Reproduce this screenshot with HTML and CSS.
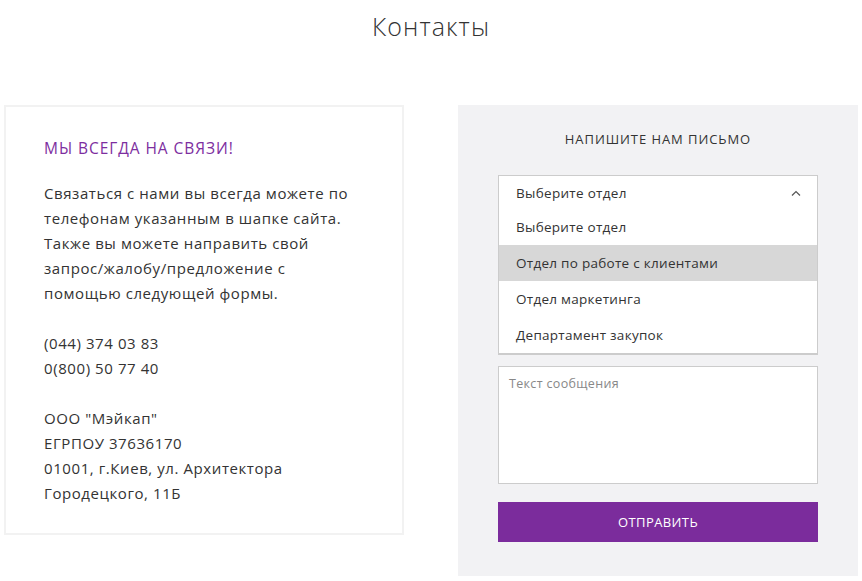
FILE: index.html
```html
<!DOCTYPE html>
<html lang="ru">
<head>
<meta charset="utf-8">
<title>Контакты</title>
<link rel="stylesheet" href="styles.css">
</head>
<body>
<h1 class="page-title">Контакты</h1>
<div class="contacts">
  <div class="card">
    <h2 class="card-title">МЫ ВСЕГДА НА СВЯЗИ!</h2>
    <p class="card-text">Связаться с нами вы всегда можете по<br>телефонам указанным в шапке сайта.<br>Также вы можете направить свой<br>запрос/жалобу/предложение с<br>помощью следующей формы.<br><br>(044) 374 03 83<br>0(800) 50 77 40<br><br>ООО "Мэйкап"<br>ЕГРПОУ 37636170<br>01001, г.Киев, ул. Архитектора<br>Городецкого, 11Б</p>
  </div>
  <div class="panel">
    <h2 class="panel-title">НАПИШИТЕ НАМ ПИСЬМО</h2>
    <div class="form">
      <div class="select">
        <div class="select-head">
          <span>Выберите отдел</span>
          <svg class="chevron" width="10" height="6" viewBox="0 0 10 6"><polyline points="1,5.5 5,1.5 9,5.5" fill="none" stroke="#555" stroke-width="1.2"/></svg>
        </div>
        <ul class="select-list">
          <li class="option">Выберите отдел</li>
          <li class="option active">Отдел по работе с клиентами</li>
          <li class="option">Отдел маркетинга</li>
          <li class="option">Департамент закупок</li>
        </ul>
      </div>
      <div class="input"></div>
      <div class="input"></div>
      <div class="input"></div>
      <div class="textarea">Текст сообщения</div>
      <div class="button">ОТПРАВИТЬ</div>
    </div>
  </div>
</div>
</body>
</html>
```
FILE: styles.css
```css
* { box-sizing: border-box; }
html, body { background: #fff; }
body {
  margin: 0;
  font-family: "Open Sans", "Noto Sans", sans-serif;
  color: #333;
}
.page-title {
  margin: 10px 0 0;
  text-align: center;
  font-size: 25px;
  line-height: 32px;
  font-weight: 300;
  letter-spacing: 1.1px;
  color: #333;
}
.contacts {
  display: flex;
  gap: 54px;
  padding: 0 4px;
  margin-top: 63px;
}
.card {
  width: 400px;
  height: 430px;
  border: 2px solid #f2f2f2;
  padding: 29px 38px 0;
}
.card-title {
  margin: 0 0 20px;
  font-size: 15.5px;
  line-height: 25px;
  font-weight: 400;
  letter-spacing: 0.95px;
  color: #7d2ea0;
}
.card-text {
  margin: 0;
  font-size: 15px;
  line-height: 25px;
  letter-spacing: 0.58px;
  color: #333;
}
.panel {
  width: 400px;
  height: 471px;
  background: #f2f2f4;
  padding: 23px 40px 0;
}
.panel-title {
  margin: 0 0 25px;
  text-align: center;
  font-size: 13px;
  line-height: 22px;
  font-weight: 400;
  letter-spacing: 0.93px;
  color: #333;
}
.form {
  display: flex;
  flex-direction: column;
  gap: 10px;
}
.select { position: relative; }
.select-head {
  height: 36px;
  border: 1px solid #ccc;
  background: #fff;
  display: flex;
  align-items: center;
  justify-content: space-between;
  padding: 0 16px 0 17px;
  font-size: 13.5px;
  letter-spacing: 0.3px;
  color: #333;
}
.select-list {
  position: absolute;
  top: 34px;
  left: 0;
  right: 0;
  margin: 0;
  padding: 0;
  list-style: none;
  background: #fff;
  border: 1px solid #ccc;
  border-top: none;
  z-index: 2;
}
.option {
  height: 36px;
  display: flex;
  align-items: center;
  padding-left: 17px;
  font-size: 13.5px;
  letter-spacing: 0.28px;
  color: #333;
}
.option.active { background: #d7d7d7; }
.input {
  height: 38px;
  border: 1px solid #ccc;
  background: #fff;
}
.textarea {
  margin-top: 1px;
  height: 118px;
  border: 1px solid #ccc;
  background: #fff;
  padding: 8px 10px;
  font-size: 12.5px;
  line-height: 18px;
  letter-spacing: 0.33px;
  color: #888;
}
.button {
  margin-top: 8px;
  height: 40px;
  background: #7b2c9c;
  color: #fff;
  display: flex;
  align-items: center;
  justify-content: center;
  font-size: 13px;
  letter-spacing: 0.4px;
}
```
